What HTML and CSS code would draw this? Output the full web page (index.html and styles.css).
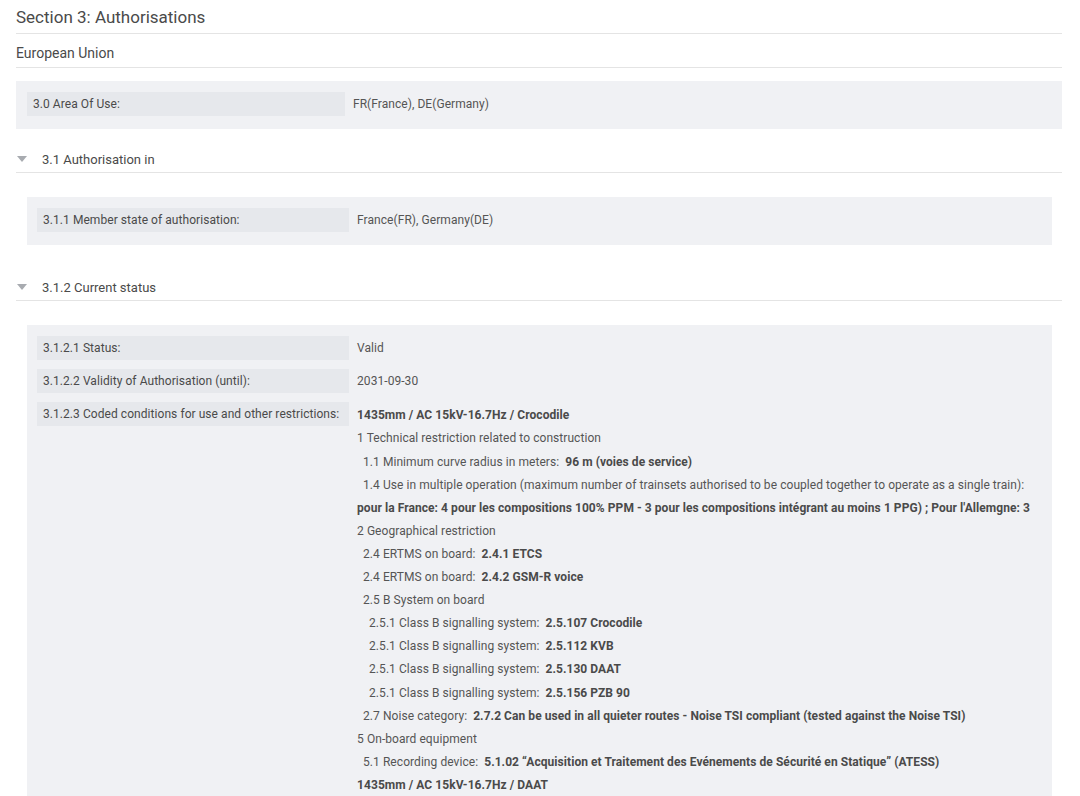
FILE: index.html
```html
<!DOCTYPE html>
<html lang="en">
<head>
<meta charset="utf-8">
<title>Section 3: Authorisations</title>
<link rel="stylesheet" href="styles.css">
</head>
<body>
<div class="page">
  <h2 class="section-title">Section 3: Authorisations</h2>
  <h3 class="group-title">European Union</h3>

  <div class="panel panel-top">
    <div class="field">
      <div class="label">3.0 Area Of Use:</div>
      <div class="value"><div class="line">FR(France), DE(Germany)</div></div>
    </div>
  </div>

  <div class="sub-header first-sub">
    <span class="caret"></span>
    <span class="sub-title">3.1 Authorisation in</span>
  </div>
  <div class="nested">
    <div class="panel">
      <div class="field">
        <div class="label">3.1.1 Member state of authorisation:</div>
        <div class="value"><div class="line">France(FR), Germany(DE)</div></div>
      </div>
    </div>
  </div>

  <div class="sub-header second-sub">
    <span class="caret"></span>
    <span class="sub-title">3.1.2 Current status</span>
  </div>
  <div class="nested">
    <div class="panel panel-open">
      <div class="field">
        <div class="label">3.1.2.1 Status:</div>
        <div class="value"><div class="line">Valid</div></div>
      </div>
      <div class="field">
        <div class="label">3.1.2.2 Validity of Authorisation (until):</div>
        <div class="value"><div class="line">2031-09-30</div></div>
      </div>
      <div class="field">
        <div class="label">3.1.2.3 Coded conditions for use and other restrictions:</div>
        <div class="value value-list">
          <div class="line"><b>1435mm / AC 15kV-16.7Hz / Crocodile</b></div>
          <div class="line">1 Technical restriction related to construction</div>
          <div class="line l2">1.1 Minimum curve radius in meters: <b class="v">96 m (voies de service)</b></div>
          <div class="line l2">1.4 Use in multiple operation (maximum number of trainsets authorised to be coupled together to operate as a single train):</div>
          <div class="line"><b>pour la France: 4 pour les compositions 100% PPM - 3 pour les compositions intégrant au moins 1 PPG) ; Pour l'Allemgne: 3</b></div>
          <div class="line">2 Geographical restriction</div>
          <div class="line l2">2.4 ERTMS on board: <b class="v">2.4.1 ETCS</b></div>
          <div class="line l2">2.4 ERTMS on board: <b class="v">2.4.2 GSM-R voice</b></div>
          <div class="line l2">2.5 B System on board</div>
          <div class="line l3">2.5.1 Class B signalling system: <b class="v">2.5.107 Crocodile</b></div>
          <div class="line l3">2.5.1 Class B signalling system: <b class="v">2.5.112 KVB</b></div>
          <div class="line l3">2.5.1 Class B signalling system: <b class="v">2.5.130 DAAT</b></div>
          <div class="line l3">2.5.1 Class B signalling system: <b class="v">2.5.156 PZB 90</b></div>
          <div class="line l2">2.7 Noise category: <b class="v">2.7.2 Can be used in all quieter routes - Noise TSI compliant (tested against the Noise TSI)</b></div>
          <div class="line">5 On-board equipment</div>
          <div class="line l2">5.1 Recording device: <b class="v">5.1.02 “Acquisition et Traitement des Evénements de Sécurité en Statique” (ATESS)</b></div>
          <div class="line"><b>1435mm / AC 15kV-16.7Hz / DAAT</b></div>
        </div>
      </div>
    </div>
  </div>
</div>
</body>
</html>
```

FILE: styles.css
```css
* { box-sizing: border-box; }

html, body {
  margin: 0;
  padding: 0;
  background: #ffffff;
  overflow: hidden;
}

body {
  font-family: Roboto, "Liberation Sans", Arial, sans-serif;
  color: #555555;
}

.page {
  padding: 0 18px 0 16px;
}

.section-title {
  margin: 0;
  font-size: 17px;
  font-weight: 400;
  line-height: 20px;
  padding: 7px 0 6px;
  color: #4a4a4a;
  border-bottom: 1px solid #e4e4e4;
}

.group-title {
  margin: 0;
  font-size: 14px;
  font-weight: 400;
  line-height: 18px;
  padding: 10px 0 5px;
  color: #4a4a4a;
  border-bottom: 1px solid #e4e4e4;
}

.panel {
  background: #f0f1f4;
  padding: 11px 10px 4px;
}

.panel-top {
  margin-top: 13px;
  padding: 11px 11px 4px;
}

.panel-open {
  padding-bottom: 20px;
}

.field {
  display: grid;
  grid-template-columns: 31.05% 1fr;
  column-gap: 8px;
  margin-bottom: 9px;
  font-size: 12px;
  letter-spacing: 0.06px;
}

.label {
  background: #e6e8ec;
  height: 24px;
  line-height: 24px;
  padding-left: 6px;
  color: #4a4a4a;
  white-space: nowrap;
}

.value {
  padding-top: 1px;
}

.value-list {
  padding-top: 2px;
}

.line {
  line-height: 23.1px;
  white-space: nowrap;
}

.line b {
  font-weight: 700;
  color: #4a4a4a;
}

.line b.v {
  margin-left: 3px;
}

.l2 { padding-left: 6px; }
.l3 { padding-left: 12px; }

.sub-header {
  display: flex;
  align-items: center;
  height: 27px;
  border-bottom: 1px solid #e4e4e4;
  font-size: 13px;
  color: #4a4a4a;
}

.first-sub { margin-top: 17px; }
.second-sub { margin-top: 29px; }

.caret {
  width: 0;
  height: 0;
  margin-left: 1px;
  border-left: 5px solid transparent;
  border-right: 5px solid transparent;
  border-top: 6px solid #a8abb0;
  margin-top: -1px;
}

.sub-title {
  margin-left: 15px;
}

.nested {
  padding: 0 10px 0 11px;
  margin-top: 24px;
}
```
